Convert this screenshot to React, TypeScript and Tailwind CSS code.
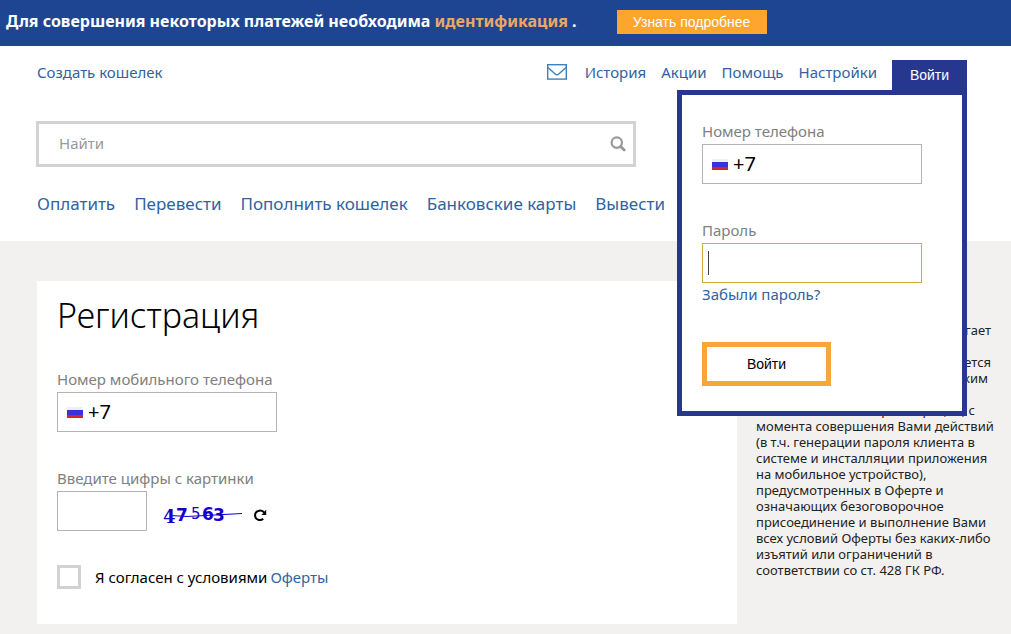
import { useId, useState } from 'react';
import type { ReactNode } from 'react';

const topLinks = ['История', 'Акции', 'Помощь', 'Настройки'];

const sections = [
  'Оплатить',
  'Перевести',
  'Пополнить кошелек',
  'Банковские карты',
  'Вывести',
];

const offer = [
  'момента совершения Вами действий',
  '(в т.ч. генерации пароля клиента в',
  'системе и инсталляции приложения',
  'на мобильное устройство),',
  'предусмотренных в Оферте и',
  'означающих безоговорочное',
  'присоединение и выполнение Вами',
  'всех условий Оферты без каких-либо',
  'изъятий или ограничений в',
  'соответствии со ст. 428 ГК РФ.',
];

const MailIcon = () => (
  <svg className="h-4 w-5" viewBox="0 0 20 16" fill="none" stroke="#3a82bd">
    <rect x="0.7" y="0.7" width="18.6" height="14.4" strokeWidth="1.4" />
    <path d="M1 3.6 8.2 10q1.8 1.6 3.6 0L19 3.6" strokeWidth="1.4" />
  </svg>
);

const SearchIcon = () => (
  <svg className="size-4" viewBox="0 0 16 16" fill="none" stroke="#999">
    <circle cx="6.8" cy="6.6" r="5.2" strokeWidth="2.2" />
    <path d="m10.6 10.4 3.6 3.6" strokeWidth="2.8" strokeLinecap="round" />
  </svg>
);

const Flag = () => (
  <svg className="h-[11px] w-4 shrink-0" viewBox="0 0 16 11">
    <rect width="16" height="11" fill="#efeff4" />
    <rect y="3" width="16" height="5" fill="#3a32d8" />
    <rect y="8" width="16" height="3" fill="#d8232f" />
  </svg>
);

const Captcha = () => (
  <svg className="h-9 w-20" viewBox="0 0 80 36" fill="#1400c8">
    <g fontFamily="DejaVu Sans" fontWeight="700" fontSize="17">
      <text x="0" y="30" fontFamily="DejaVu Serif" fontSize="18">4</text>
      <text x="13" y="28">7</text>
      <text x="28" y="26" fontWeight="400" fontSize="15">5</text>
      <text x="39" y="27">6</text>
      <text x="50" y="28">3</text>
    </g>
    <path d="M8 22.5 24 23.5 79 20.5" stroke="#1400c8" fill="none" />
  </svg>
);

const ReloadIcon = () => (
  <svg className="size-[14px]" viewBox="0 0 14 14" fill="none" stroke="#000">
    <path d="M11.4 4.6C9.8 2.6 7 2 4.8 3.1a4.6 4.6 0 0 0 .4 8.6c1.7.6 3.6.3 5-1" strokeWidth="2" />
    <path d="M13.2 1.6V7H8.4l2-2z" fill="#000" stroke="none" />
  </svg>
);

const PhoneField = ({ label }: { label: ReactNode }) => {
  const id = useId();
  const [phone, setPhone] = useState('+7');

  return (
    <div className="flex flex-col">
      <label htmlFor={id} className="pb-[2px] text-[15px] leading-[22px] text-[#808080]">
        {label}
      </label>
      <div className="flex h-10 w-[220px] items-center gap-[5px] border border-[#b4b4b4] bg-white pl-[9px]">
        <Flag />
        <input
          id={id}
          type="tel"
          value={phone}
          onChange={(e) => setPhone(e.target.value)}
          className="w-full min-w-0 text-xl text-black outline-none"
        />
      </div>
    </div>
  );
};

const LoginPopup = () => (
  <form className="absolute top-full right-0 z-10 flex w-[290px] flex-col items-start border-[5px] border-[#27378f] bg-white px-5 pt-[25px] pb-[25px]">
    <PhoneField label="Номер телефона" />
    <label
      htmlFor="password"
      className="mt-[35px] pb-[2px] text-[15px] leading-[22px] text-[#808080]"
    >
      Пароль
    </label>
    <div className="flex h-10 w-[220px] items-center border border-[#cfae38] pl-[5px]">
      <span className="h-6 w-px bg-[#444]" />
      <input id="password" type="password" className="w-full min-w-0 outline-none" />
    </div>
    <a href="#forgot" className="pb-[2px] text-[15px] leading-[22px]">
      Забыли пароль?
    </a>
    <button
      type="button"
      className="mt-[35px] h-11 w-[129px] border-[5px] border-[#f7a63a] font-['Liberation_Sans',sans-serif] text-sm text-black"
    >
      Войти
    </button>
  </form>
);

const Header = () => (
  <header className="bg-white pr-11 pb-[25px] pl-9">
    <div className="flex h-11 items-end justify-between">
      <a href="#create" className="pb-[7px] pl-px text-[15px]">
        Создать кошелек
      </a>
      <nav className="flex items-end gap-[15px]">
        <a href="#mail" aria-label="Сообщения" className="mr-[3px] pb-[10px]">
          <MailIcon />
        </a>
        {topLinks.map((name) => (
          <a key={name} href="#top" className="pb-[7px] text-[15px]">
            {name}
          </a>
        ))}
        <div className="relative">
          <button
            type="button"
            className="h-[30px] w-[75px] bg-[#27378f] font-['Liberation_Sans',sans-serif] text-sm text-white"
          >
            Войти
          </button>
          <LoginPopup />
        </div>
      </nav>
    </div>
    <form className="mt-[31px] flex h-[46px] w-full max-w-[600px] items-center border-[3px] border-[#d2d2d2] pr-[7px] pl-5">
      <input
        type="search"
        aria-label="Найти"
        placeholder="Найти"
        className="min-w-0 flex-1 pb-[2px] text-[15px] outline-none placeholder:text-[#999]"
      />
      <button type="button" aria-label="Искать">
        <SearchIcon />
      </button>
    </form>
    <nav className="mt-[25px] flex gap-[19px] pl-px text-[17px] leading-6">
      {sections.map((name) => (
        <a key={name} href="#section" className="whitespace-nowrap">
          {name}
        </a>
      ))}
    </nav>
  </header>
);

const Registration = () => (
  <form className="w-[700px] bg-white px-5 pt-[14px] pb-[35px]">
    <h1 className="mb-[33px] text-[34px] leading-10 font-light text-black">Регистрация</h1>
    <PhoneField label="Номер мобильного телефона" />
    <label
      htmlFor="captcha"
      className="mt-[35px] block pb-[2px] text-[15px] leading-[22px] text-[#808080]"
    >
      Введите цифры с картинки
    </label>
    <div className="flex items-center">
      <input id="captcha" className="h-10 w-[90px] border border-[#b4b4b4] px-2 outline-none" />
      <span className="ml-4">
        <Captcha />
      </span>
      <button type="button" aria-label="Обновить картинку" className="ml-[10px] pt-2">
        <ReloadIcon />
      </button>
    </div>
    <div className="mt-[34px] flex items-center text-[15px] text-black">
      <input
        id="agree"
        type="checkbox"
        className="mr-[14px] size-6 appearance-none border-[3px] border-[#d2d2d2] checked:bg-[#27378f]"
      />
      <label htmlFor="agree">Я согласен с условиями</label>
      <a href="#offer" className="ml-[3px]">
        Оферты
      </a>
    </div>
  </form>
);

const Offer = () => (
  <aside className="flex-1 pt-[41px] text-[13px] leading-4 whitespace-nowrap text-[#222]">
    <div className="grid w-[235px] auto-rows-[16px] text-right">
      <span>предлагает</span>
      <span className="row-start-3">является</span>
      <span className="row-start-4 pr-[3px]">таким</span>
      <span className="row-start-6 pr-4">регистрации, с</span>
    </div>
    {offer.map((line) => (
      <div key={line}>{line}</div>
    ))}
  </aside>
);

const App = () => (
  <div className="min-h-screen bg-[#f2f1f0] font-['Noto_Sans',sans-serif] text-[#222] [&_a]:text-[#32629f]">
    <div className="flex h-[46px] items-center bg-[#1d4592] pb-[3px] pl-[6px]">
      <p className="pb-[2px] text-[16px] font-bold text-white">
        Для совершения некоторых платежей необходима{' '}
        <span className="text-[#eda765]">идентификация</span> .
      </p>
      <button
        type="button"
        className="ml-10 h-6 w-[150px] bg-[#fea52f] font-['Liberation_Sans',sans-serif] text-sm text-white"
      >
        Узнать подробнее
      </button>
    </div>
    <Header />
    <main className="flex items-start gap-[19px] pt-10 pb-[10px] pl-[37px]">
      <Registration />
      <Offer />
    </main>
  </div>
);

export default App;
